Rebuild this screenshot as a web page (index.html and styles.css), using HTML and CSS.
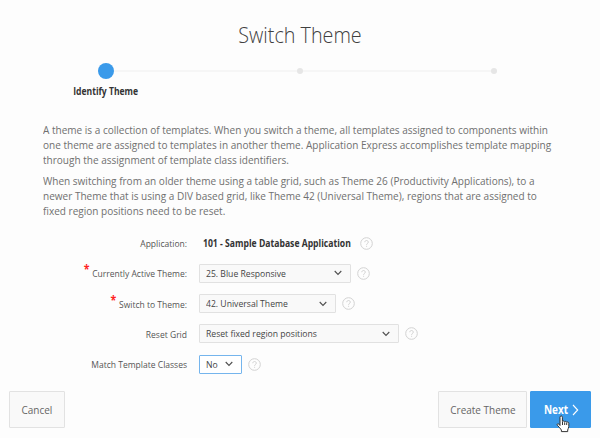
FILE: index.html
```html
<!DOCTYPE html>
<html lang="en">
<head>
<meta charset="utf-8">
<title>Switch Theme</title>
<link rel="stylesheet" href="styles.css">
</head>
<body>
<svg class="defs" width="0" height="0">
  <symbol id="help" viewBox="0 0 13 13"><circle cx="6.5" cy="6.5" r="5.8"/><path d="M4.8 5.2c0-2.3 3.5-2.2 3.5 0 0 1.3-1.7 1.2-1.7 2.6M6.6 8.8v1"/></symbol>
  <symbol id="chevron" viewBox="0 0 8 6"><path d="M.7 1 4 4.4 7.3 1"/></symbol>
</svg>
<main class="wizard">
  <h1 class="title">Switch Theme</h1>
  <ol class="steps">
    <li class="step active"><span class="dot"></span><span class="step-name">Identify Theme</span></li>
    <li class="step"><span class="dot"></span></li>
    <li class="step"><span class="dot"></span></li>
  </ol>
  <section class="intro">
    <p>A theme is a collection of templates. When you switch a theme, all templates assigned to components within<br>one theme are assigned to templates in another theme. Application Express accomplishes template mapping<br>through the assignment of template class identifiers.</p>
    <p>When switching from an older theme using a table grid, such as Theme 26 (Productivity Applications), to a<br>newer Theme that is using a DIV based grid, like Theme 42 (Universal Theme), regions that are assigned to<br>fixed region positions need to be reset.</p>
  </section>
  <form class="form">
    <div class="row"><span class="label">Application:</span><strong class="value"><span class="text">101 - Sample Database Application</span></strong><svg class="help"><use href="#help"/></svg></div>
    <div class="row"><span class="label"><i class="required">*</i>Currently Active Theme:</span><span class="select current"><span class="text">25. Blue Responsive</span><svg class="chevron"><use href="#chevron"/></svg></span><svg class="help"><use href="#help"/></svg></div>
    <div class="row"><span class="label"><i class="required">*</i>Switch to Theme:</span><span class="select target"><span class="text">42. Universal Theme</span><svg class="chevron"><use href="#chevron"/></svg></span><svg class="help"><use href="#help"/></svg></div>
    <div class="row"><span class="label">Reset Grid</span><span class="select reset"><span class="text">Reset fixed region positions</span><svg class="chevron"><use href="#chevron"/></svg></span><svg class="help"><use href="#help"/></svg></div>
    <div class="row"><span class="label">Match Template Classes</span><span class="select match"><span class="text">No</span><svg class="chevron"><use href="#chevron"/></svg></span><svg class="help"><use href="#help"/></svg></div>
  </form>
  <footer class="actions">
    <button class="button cancel"><span class="caption">Cancel</span></button>
    <button class="button create"><span class="caption">Create Theme</span></button>
    <button class="button next"><span class="caption">Next</span><svg class="arrow" viewBox="0 0 7 12"><path d="M1 1l4.7 5L1 11"/></svg></button>
  </footer>
  <svg class="cursor" viewBox="0 0 14 18"><path d="M4 10.5V2.3C4 .4 6.4.4 6.4 2.3v4.2c.4-.8 1.9-.7 2.2.3.6-.7 1.9-.5 2.1.5.8-.6 2.1-.2 2.1 1v3.2c0 1.6-1 2.3-1.1 3.5v1.6H5.4V15c-.9-1.5-2.4-2.9-4-4.7-.9-1.2.6-2.1 1.5-1.2z"/><path d="M6.5 7v3M8.7 7.3V10M10.7 7.8V10"/></svg>
</main>
</body>
</html>
```
FILE: styles.css
```css
* { box-sizing: border-box; }
body {
  margin: 0;
  background: #fdfdfd;
  color: #707070;
  font-family: "Open Sans", "Noto Sans", sans-serif;
}
.defs { position: absolute; }
.wizard {
  position: relative;
  display: flex;
  flex-direction: column;
  width: 600px;
  height: 438px;
  overflow: hidden;
}
.title {
  margin: 19px 0 0;
  height: 31px;
  font-size: 22px;
  line-height: 30px;
  font-weight: 300;
  text-align: center;
  color: #404040;
  transform: scaleX(.897);
}
.steps {
  display: grid;
  grid-template-columns: repeat(3, 194px);
  justify-content: center;
  margin: 13px 0 0;
  padding: 0;
  height: 59px;
  list-style: none;
  background: linear-gradient(#f6f6f6, #f6f6f6) 106px 7px / 388px 2px no-repeat;
}
.step {
  display: flex;
  flex-direction: column;
  align-items: center;
}
.dot {
  width: 6px;
  height: 6px;
  margin-top: 5px;
  border-radius: 50%;
  background: #e6e6e6;
}
.active .dot {
  width: 16px;
  height: 16px;
  margin-top: 0;
  background: #3a9aea;
}
.step-name {
  margin-top: 6px;
  font-size: 9.7px;
  line-height: 13px;
  font-weight: 700;
  color: #333;
  transform: scaleX(.885);
}
.intro {
  margin-left: 43px;
  height: 106px;
  font-size: 11.6px;
  line-height: 15.1px;
  white-space: nowrap;
  transform: scaleX(.865);
  transform-origin: left;
}
.intro p { margin: 0 0 6px; }
.form { height: 163px; }
.row {
  display: flex;
  align-items: center;
  height: 30.25px;
  font-size: 9.7px;
  white-space: nowrap;
}
.label {
  width: 187px;
  margin-right: 12px;
  padding-top: 1px;
  text-align: right;
  color: #555;
  transform: scaleX(.88);
  transform-origin: right;
}
.required {
  position: relative;
  top: -3px;
  margin-right: 3px;
  font-size: 12px;
  line-height: 1px;
  font-style: normal;
  font-weight: 700;
  color: #f22;
}
.value {
  width: 148px;
  margin-left: 4px;
  color: #333;
}
.text {
  display: inline-block;
  transform: scaleX(.89);
  transform-origin: left;
}
.select {
  display: flex;
  align-items: center;
  justify-content: space-between;
  height: 19px;
  padding: 0 8px 0 6px;
  border: 1px solid #e1e1e1;
  border-radius: 1px;
  background: #f9f9f9;
  color: #444;
}
.current { width: 152px; }
.target { width: 137px; }
.reset { width: 200px; }
.match {
  width: 43px;
  border-color: #75b5ed;
  background: #fff;
}
.chevron {
  width: 8px;
  height: 6px;
  fill: none;
  stroke: #505050;
  stroke-width: 1.1;
}
.help {
  width: 13px;
  height: 13px;
  margin-left: 6px;
  fill: none;
  stroke: #d2d2d2;
  stroke-width: 1;
}
.value + .help { margin-left: 9px; }
.actions {
  display: flex;
  padding: 0 9px;
}
.button {
  height: 37px;
  padding: 0;
  border: 1px solid #e2e2e2;
  border-radius: 1px;
  background: #f9f9f9;
  color: #666;
  font: inherit;
  font-size: 11.6px;
}
.caption {
  display: inline-block;
  transform: scaleX(.86);
}
.cancel { width: 56px; }
.create {
  width: 89px;
  margin-left: auto;
}
.next {
  display: flex;
  align-items: center;
  justify-content: center;
  width: 61px;
  margin-left: 3px;
  border-color: #3a9aea;
  background: #3a9aea;
  color: #fff;
  font-weight: 700;
}
.arrow {
  width: 7px;
  height: 12px;
  margin-left: 2px;
  fill: none;
  stroke: #fff;
  stroke-width: 1.1;
}
.cursor {
  position: absolute;
  left: 556px;
  top: 415px;
  width: 14px;
  height: 18px;
  fill: #fff;
  stroke: #333;
  stroke-width: 1;
}
```
